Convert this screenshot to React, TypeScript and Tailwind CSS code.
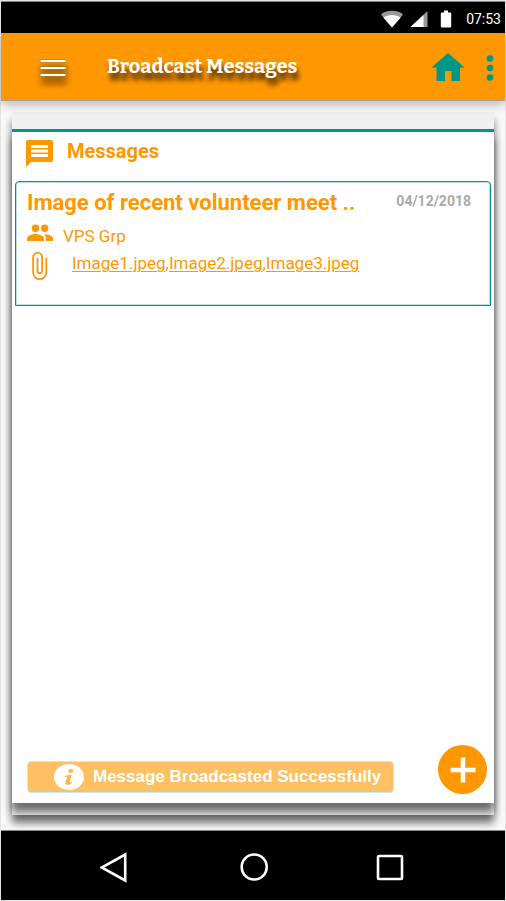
import type { ReactNode } from 'react';

function WifiIcon() {
  return (
    <svg viewBox="0 0 24 18" className="h-[18px] w-6" aria-hidden="true">
      <path d="M12 17.500 1 4.600C3.400 2 7.500.8 12 .8S20.600 2 23 4.600Z" fill="#999" />
      <path d="M12 17.500 3.300 7.500C6 5.700 9 4.900 12 4.900S18 5.700 20.700 7.500Z" fill="#fff" />
    </svg>
  );
}

function SignalIcon() {
  return (
    <svg viewBox="0 0 18 16" className="h-4 w-[18px]" aria-hidden="true">
      <path d="M17.500 0V16H.5Z" fill="#999" />
      <path d="M13.500 4V16H.5Z" fill="#fff" />
    </svg>
  );
}

function BatteryIcon() {
  return (
    <svg viewBox="0 0 12 18" className="h-[18px] w-3" aria-hidden="true">
      <path d="M4 .5h4v2h2a1.200 1.200 0 0 1 1.200 1.200v12.600a1.200 1.200 0 0 1-1.200 1.200H2A1.200 1.200 0 0 1 .8 16.300V3.700A1.200 1.200 0 0 1 2 2.500h2Z" fill="#fff" />
    </svg>
  );
}

function StatusBar() {
  return (
    <div className="flex h-8 items-center justify-end border-t border-[#888] bg-black pr-1 pt-0.5 text-white">
      <WifiIcon />
      <span className="ml-1.5 flex"><SignalIcon /></span>
      <span className="ml-3 flex"><BatteryIcon /></span>
      <span className="ml-3.5 text-sm leading-4">07:53</span>
    </div>
  );
}

function Header() {
  return (
    <header className="relative flex h-[68px] items-center border-b border-[#b09a90] bg-[#ff9800] pr-[11px] pl-[39px] shadow-[0_4px_10px_rgba(0,0,0,0.25)]">
      <button type="button" aria-label="Open menu" className="flex pt-0.5 drop-shadow-[1px_7px_3px_rgba(0,0,0,0.7)]">
        <svg viewBox="0 0 26 20" className="h-5 w-[26px]" aria-hidden="true">
          <path d="M0 3h26M0 10h26M0 17h26" stroke="#a9793a" strokeWidth="3" />
          <path d="M.5 3h25M.5 10h25M.5 17h25" stroke="#fff" strokeWidth="2" />
        </svg>
      </button>
      <h1 className="ml-[41px] flex-1 pb-0.5 font-[Bitter,'DejaVu_Serif_Condensed','DejaVu_Serif',serif] text-xl leading-6 font-bold text-white [text-shadow:2px_7px_5px_rgba(0,0,0,0.8)]">
        Broadcast Messages
      </h1>
      <button type="button" aria-label="Home" className="flex">
        <svg viewBox="0 0 34 30" className="h-[30px] w-[34px]" aria-hidden="true">
          <path d="M17 1 33.500 15.500H29V29H20.500V19H14V29H5.500V15.500H.5Z" fill="#009688" />
        </svg>
      </button>
      <button type="button" aria-label="More options" className="ml-[21px] flex pt-0.5">
        <svg viewBox="0 0 8 28" className="h-7 w-2" aria-hidden="true">
          <circle cx="4" cy="4.500" r="3.300" fill="#009688" />
          <circle cx="4" cy="14" r="3.300" fill="#009688" />
          <circle cx="4" cy="23.500" r="3.300" fill="#009688" />
        </svg>
      </button>
    </header>
  );
}

function FileLink({ children }: { children: ReactNode }) {
  return <a href="#" className="underline decoration-1 underline-offset-2">{children}</a>;
}

function MessageCard() {
  return (
    <article className="mx-[3px] h-[125px] rounded-t border border-[#009688] px-[11px] pt-[7px] shadow-[inset_0_0_0_1px_#b9e0dc]">
      <div className="flex items-start justify-between pr-2">
        <h3 className="text-[22px] leading-7 font-bold">Image of recent volunteer meet ..</h3>
        <time className="mt-0.5 text-sm leading-5 font-bold text-[#a9a9a9]">04/12/2018</time>
      </div>
      <div className="flex h-[34px] items-center pt-1">
        <svg viewBox="0 0 26 18" className="mb-1.5 h-[18px] w-[26px] shrink-0" fill="#ff9800" aria-hidden="true">
          <circle cx="8.500" cy="4.200" r="3.700" />
          <path d="M0 17v-2.500C0 11.500 5.500 10 8.500 10s8.500 1.500 8.500 4.500V17Z" />
          <circle cx="17.700" cy="4.200" r="3.700" />
          <path d="M17 10.100c3.300.3 9 1.700 9 4.400V17h-7.200v-2.500c0-1.900-.5-3.300-1.800-4.400Z" />
        </svg>
        <p className="ml-2.5 text-[17px] leading-6">VPS Grp</p>
      </div>
      <div className="flex items-start">
        <svg viewBox="0 0 18 30" className="ml-1 h-[30px] w-[18px] shrink-0" fill="none" stroke="#ff9800" strokeWidth="1.800" strokeLinecap="round" aria-hidden="true">
          <path d="M15.300 7.500V21.500a6.600 6.600 0 0 1-13.200 0V6.200a4.500 4.500 0 0 1 9 0V20a2.300 2.300 0 0 1-4.600 0V7.500" />
        </svg>
        <p className="ml-[23px] text-[17px] leading-6">
          <FileLink>Image1.jpeg</FileLink>,<FileLink>Image2.jpeg</FileLink>,<FileLink>Image3.jpeg</FileLink>
        </p>
      </div>
    </article>
  );
}

function Toast() {
  return (
    <div role="status" className="mb-px flex h-8 w-[367px] items-center gap-[9px] rounded border border-[#cdeaf0] bg-[#ffbf63] pl-[26px] font-['Liberation_Sans',Arial,sans-serif] text-[17px] font-bold text-white">
      <svg viewBox="0 0 30 26" className="h-[26px] w-[30px] shrink-0" aria-hidden="true">
        <ellipse cx="15" cy="13" rx="15" ry="13" fill="#fff" />
        <ellipse cx="16.700" cy="7" rx="2.500" ry="2" fill="#ffb54a" />
        <path d="M10.500 12.200c2-.9 4.200-1.500 7.200-1.500l-2.200 7.300c-.2.900.5.900 2.300-.3l.6.700c-2.500 2.300-4.300 2.600-5.800 2.300-1.300-.3-1.500-1.200-1.100-2.400l1.500-4.800c.2-.8-.5-.9-2.200-.5Z" fill="#ffb54a" />
      </svg>
      <span className="whitespace-nowrap">Message Broadcasted Successfully</span>
    </div>
  );
}

function NavBar() {
  return (
    <nav className="relative flex h-[70px] items-center justify-center gap-[105px] border-t border-[#888] bg-black pt-0.5">
      <button type="button" aria-label="Back" className="flex">
        <svg viewBox="0 0 32 32" className="size-8" fill="none" stroke="#fff" strokeWidth="2.600" aria-hidden="true">
          <path d="M25.200 3.500V29.500L1.700 16.500Z" />
        </svg>
      </button>
      <button type="button" aria-label="Home screen" className="flex">
        <svg viewBox="0 0 32 32" className="size-8" fill="none" stroke="#fff" strokeWidth="2.600" aria-hidden="true">
          <circle cx="17.200" cy="16" r="12.500" />
        </svg>
      </button>
      <button type="button" aria-label="Recent apps" className="flex">
        <svg viewBox="0 0 32 32" className="size-8" fill="none" stroke="#fff" strokeWidth="2.600" aria-hidden="true">
          <rect x="4" y="5" width="24" height="23" rx="1" />
        </svg>
      </button>
    </nav>
  );
}

export default function App() {
  return (
    <div className="flex min-h-screen flex-col border border-[#e4e4e4] bg-white font-[Roboto,sans-serif]">
      <StatusBar />
      <Header />
      <main className="flex flex-1 flex-col bg-[#fafafa] px-[11px] pt-[11px] pb-[15px]">
        <div className="flex flex-1 flex-col bg-[#f0f0f0] pt-[17px] pb-3 shadow-[0_8px_8px_rgba(0,0,0,0.55)]">
          <section className="flex flex-1 flex-col border-t-[3px] border-[#009688] bg-white text-[#ff9800] shadow-[0_9px_8px_rgba(0,0,0,0.55)]">
            <div className="flex h-[49px] items-center pb-3 pl-3.5">
              <svg viewBox="0 0 27 27" className="mt-1.5 size-[27px]" aria-hidden="true">
                <path d="M2 0h23A2 2 0 0 1 27 2v18a2 2 0 0 1-2 2H5L0 27V2A2 2 0 0 1 2 0Z" fill="#ff9800" />
                <path d="M5 6.500h17M5 11h17M5 15.500h17" stroke="#fff" strokeWidth="3" />
              </svg>
              <h2 className="ml-3.5 text-xl leading-6 font-bold">Messages</h2>
            </div>
            <MessageCard />
            <div className="mt-auto flex items-end justify-between pr-[7px] pb-[9px] pl-[15px]">
              <Toast />
              <button type="button" aria-label="New message" className="flex size-[49px] shrink-0 items-center justify-center rounded-full bg-[#ff9800]">
                <svg viewBox="0 0 26 26" className="size-[26px]" aria-hidden="true">
                  <path d="M13 .5v25M.5 13h25" stroke="#fff" strokeWidth="4.500" />
                </svg>
              </button>
            </div>
          </section>
        </div>
      </main>
      <NavBar />
    </div>
  );
}
